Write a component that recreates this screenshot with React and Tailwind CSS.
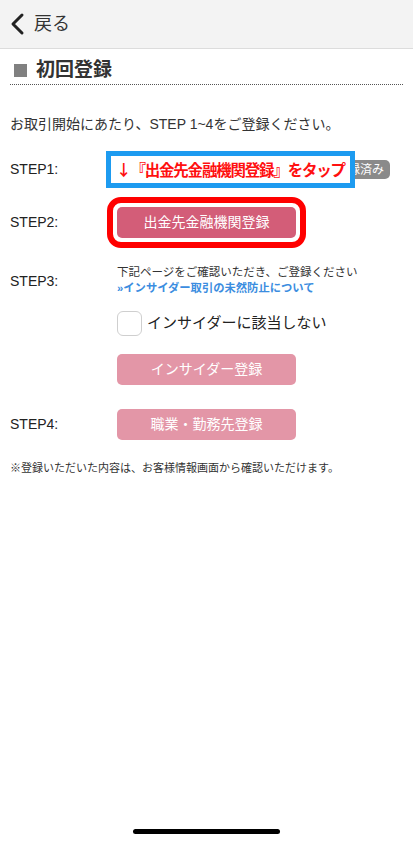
import React from 'react';

const jp = { fontFamily: '"Liberation Sans", "Noto Sans CJK JP", sans-serif' };

const StepLabel = ({ children }) => (
  <div className="w-[107px] shrink-0 text-[14px] text-[#222]">{children}</div>
);

const PinkButton = ({ children, strong }) => (
  <div
    className={
      'w-[179px] h-[31px] rounded-[5px] flex items-center justify-center text-[14px] text-white ' +
      (strong ? 'bg-[#d35d78]' : 'bg-[#e396a7]')
    }
  >
    {children}
  </div>
);

export default function App() {
  return (
    <div className="h-[842px] w-[413px] bg-white flex flex-col overflow-hidden" style={jp}>
      {/* header */}
      <div className="h-[49px] bg-[#f3f3f3] border-b border-[#dcdcdc] flex items-center pl-[8px] shrink-0">
        <svg width="18" height="24" viewBox="0 0 18 24" className="mr-[8px]">
          <polyline points="14,3 5,12 14,21" fill="none" stroke="#222" strokeWidth="3" strokeLinecap="round" strokeLinejoin="round" />
        </svg>
        <span className="text-[18px] text-[#333]">戻る</span>
      </div>

      {/* title */}
      <div className="mx-[10px] mt-[8px] pb-[1px] flex items-center gap-[9px] border-b border-dotted border-[#555]">
        <div className="w-[13px] h-[13px] bg-[#808080] ml-[4px]" />
        <span className="text-[19px] font-bold text-[#333] leading-[26px]">初回登録</span>
      </div>

      <p className="mx-[10px] mt-[29px] text-[14px] text-[#333] leading-[20px]">
        お取引開始にあたり、STEP 1~4をご登録ください。
      </p>

      {/* STEP1 */}
      <div className="flex items-center pl-[10px] mt-[17px] h-[37px]">
        <StepLabel>STEP1:</StepLabel>
        <div className="relative flex-1 h-full flex items-center">
          <div className="ml-[213px] w-[60px] h-[19px] rounded-[5px] bg-[#8a8a8a] text-white text-[12px] flex items-center justify-center">
            登録済み
          </div>
          <div className="absolute left-[-11px] top-0 w-[249px] h-[37px] border-[5px] border-[#1d9bf0] bg-white flex items-center justify-center">
            <span
              className="text-[15.5px] font-bold text-[#ff1010] tracking-[-1.2px] whitespace-nowrap"
              style={{ fontFamily: '"Noto Sans CJK JP", sans-serif' }}
            >
              ↓『出金先金融機関登録』をタップ
            </span>
          </div>
        </div>
      </div>

      {/* STEP2 */}
      <div className="flex items-center pl-[10px] mt-[19px]">
        <StepLabel>STEP2:</StepLabel>
        <div className="relative">
          <div className="absolute -inset-[10px] rounded-[14px] border-[6px] border-[#ff0000]" />
          <PinkButton strong>出金先金融機関登録</PinkButton>
        </div>
      </div>

      {/* STEP3 */}
      <div className="flex pl-[10px] mt-[26px]">
        <div className="pt-[7px]">
          <StepLabel>STEP3:</StepLabel>
        </div>
        <div className="flex flex-col">
          <span className="text-[11.5px] text-[#333] leading-[16px]">下記ページをご確認いただき、ご登録ください</span>
          <span className="text-[11.3px] font-bold text-[#3b8de0] leading-[16px]">»インサイダー取引の未然防止について</span>
          <div className="flex items-center mt-[15px] gap-[5px]">
            <div className="w-[25px] h-[25px] rounded-[6px] border border-[#cfcfcf] bg-white" />
            <span className="text-[15px] text-[#222]">インサイダーに該当しない</span>
          </div>
          <div className="mt-[18px]">
            <PinkButton>インサイダー登録</PinkButton>
          </div>
        </div>
      </div>

      {/* STEP4 */}
      <div className="flex items-center pl-[10px] mt-[24px]">
        <StepLabel>STEP4:</StepLabel>
        <PinkButton>職業・勤務先登録</PinkButton>
      </div>

      <p className="mx-[10px] mt-[20px] text-[11px] text-[#333]">
        ※登録いただいた内容は、お客様情報画面から確認いただけます。
      </p>

      <div className="flex-1" />
      <div className="mx-auto mb-[8px] w-[147px] h-[5px] rounded-full bg-black" />
    </div>
  );
}
